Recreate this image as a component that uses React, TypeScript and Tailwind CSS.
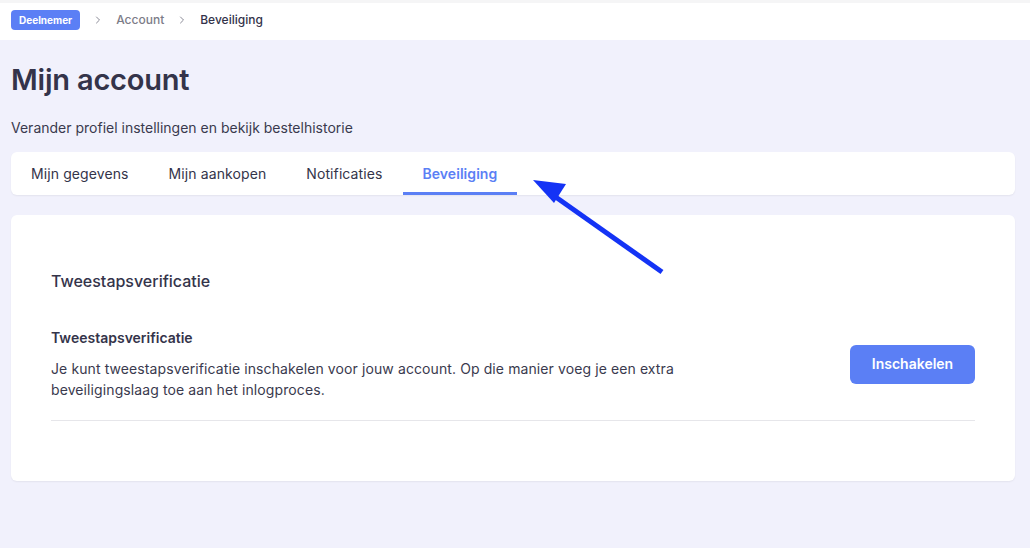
import { ChevronRight } from 'lucide-react'

const tabs = ['Mijn gegevens', 'Mijn aankopen', 'Notificaties', 'Beveiliging']

function Breadcrumb() {
  return (
    <div className="h-10 bg-white border-t-[3px] border-[#f5f5f6] flex items-center pl-[11px] pb-[3px] gap-3">
      <span className="bg-[#5b7ff5] text-white text-[10px] font-bold rounded px-2 h-5 flex items-center">
        Deelnemer
      </span>
      <ChevronRight className="w-3 h-3 text-[#8a8a96]" strokeWidth={2} />
      <span className="text-xs font-medium text-[#7c7c88]">Account</span>
      <ChevronRight className="w-3 h-3 text-[#8a8a96]" strokeWidth={2} />
      <span className="text-xs font-medium text-[#33334a]">Beveiliging</span>
    </div>
  )
}

function Arrow() {
  return (
    <svg className="absolute left-[520px] top-[170px]" width="160" height="115" viewBox="0 0 160 115">
      <line x1="142" y1="102" x2="30" y2="23" stroke="#1433f5" strokeWidth="5" />
      <polygon points="13,10 46,14 34,33" fill="#1433f5" />
    </svg>
  )
}

export default function App() {
  const active = 'Beveiliging'
  return (
    <div
      className="relative min-h-[548px] bg-[#f1f1fc] text-[#34344a]"
      style={{ fontFamily: 'Inter, "Noto Sans", sans-serif' }}
    >
      <Breadcrumb />

      <div className="pl-[11px] pr-[15px]">
        <h1 className="text-[29px] font-semibold leading-none mt-[25px] tracking-[-0.2px]">Mijn account</h1>
        <p className="text-sm mt-[24px] text-[#3a3a4e]">Verander profiel instellingen en bekijk bestelhistorie</p>

        {/* Tabs */}
        <div className="mt-[14px] bg-white rounded-md shadow-[0_1px_2px_rgba(0,0,0,0.06)] h-[43px] flex">
          {tabs.map((t) => (
            <button
              key={t}
              className={
                t === active
                  ? 'px-5 text-sm font-semibold tracking-[0.05px] text-[#5b7ff5] border-b-[3px] border-[#5b7ff5] pt-[3px]'
                  : 'px-5 text-sm tracking-[0.1px] text-[#34344a] border-b-[3px] border-transparent pt-[3px]'
              }
            >
              {t}
            </button>
          ))}
        </div>

        {/* Main card */}
        <div className="mt-5 bg-white rounded-md shadow-[0_1px_2px_rgba(0,0,0,0.06)] px-10 pt-[56px] pb-[60px]">
          <h2 className="text-base font-medium leading-5">Tweestapsverificatie</h2>
          <div className="mt-[37px] flex items-center justify-between pb-5 border-b border-[#e6e6ea]">
            <div className="max-w-[640px]">
              <h3 className="text-sm font-semibold leading-5">Tweestapsverificatie</h3>
              <p className="text-sm leading-[21px] mt-[10px] tracking-[0.1px] text-[#3a3a4e]">
                Je kunt tweestapsverificatie inschakelen voor jouw account. Op die manier voeg je een extra
                beveiligingslaag toe aan het inlogproces.
              </p>
            </div>
            <button className="bg-[#5b7ff5] text-white text-sm font-semibold rounded-md w-[125px] h-[39px]">
              Inschakelen
            </button>
          </div>
        </div>
      </div>

      <Arrow />
    </div>
  )
}
